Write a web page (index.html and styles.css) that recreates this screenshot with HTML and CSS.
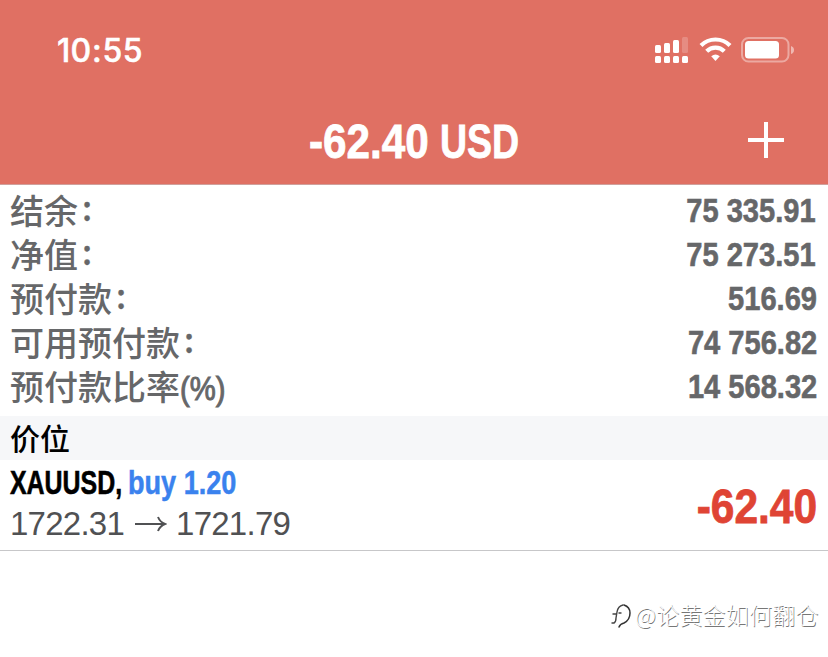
FILE: index.html
```html
<!DOCTYPE html>
<html lang="zh-CN">
<head>
<meta charset="utf-8">
<title>XAUUSD</title>
<link rel="stylesheet" href="styles.css">
</head>
<body>
<header class="header">
  <div class="status">
    <span class="clock">10<span class="clock-colon">:</span>55</span>
    <svg class="status-icons" width="142" height="30" viewBox="0 0 142 30" fill="#fff">
      <rect x="3" y="10" width="6" height="8" rx="1.5"/><rect x="12" y="8" width="6" height="10" rx="1.5"/><rect x="21" y="5" width="6" height="13" rx="1.5"/><rect x="30" y="2" width="6" height="16" rx="1.5" opacity=".2"/>
      <rect x="3" y="21" width="6" height="7" rx="1.5"/><rect x="12" y="21" width="6" height="7" rx="1.5"/><rect x="21" y="21" width="6" height="7" rx="1.5"/><rect x="30" y="21" width="6" height="7" rx="1.5"/>
      <g fill="none" stroke="#fff" stroke-width="4.2"><path d="M49 10.5a20.500 20.500 0 0 1 29 0"/><path d="M54.700 16.300a12.500 12.500 0 0 1 17.600 0"/></g>
      <path d="M59.200 21.300q4.300-3.600 8.600 0L63.500 26Z"/>
      <rect x="90" y="3" width="46.500" height="23.500" rx="6.500" fill="none" stroke="#fff" stroke-width="2" opacity=".4"/>
      <rect x="93" y="6" width="34" height="17.500" rx="3.500"/><path d="M139 11q3 1 3 4t-3 4Z" opacity=".5"/>
    </svg>
  </div>
  <div class="titlebar">
    <h1 class="title"><span class="amount">-62.40</span><span class="currency">USD</span></h1>
    <svg class="plus" width="36" height="36" viewBox="0 0 36 36"><path d="M18 0v36M0 18h36" stroke="#fff" stroke-width="4"/></svg>
  </div>
</header>
<main>
  <dl class="account">
    <div class="row"><dt>结余<i class="colon">:</i></dt><dd class="ends-one">75 335.91</dd></div>
    <div class="row"><dt>净值<i class="colon">:</i></dt><dd class="ends-one">75 273.51</dd></div>
    <div class="row"><dt>预付款<i class="colon">:</i></dt><dd>516.69</dd></div>
    <div class="row"><dt>可用预付款<i class="colon">:</i></dt><dd>74 756.82</dd></div>
    <div class="row"><dt>预付款比率<span class="percent">(%)</span></dt><dd>14 568.32</dd></div>
  </dl>
  <h2 class="section">价位</h2>
  <section class="position">
    <div>
      <div class="symbol"><span class="name">XAUUSD,</span><span class="side">buy 1.20</span></div>
      <div class="prices">1722.31<svg class="arrow" width="32" height="18" viewBox="0 0 32 18"><path d="M0 9h30M23 2q2 5 7 7q-5 2-7 7" fill="none" stroke="#505153" stroke-width="2"/></svg>1721.79</div>
    </div>
    <div class="profit">-62.40</div>
  </section>
</main>
<footer class="watermark">
  <svg class="mark" width="22" height="28" viewBox="0 0 22 28" fill="none" stroke-linecap="round"><path d="M2 22h2q2-1 2-5l1-6q1-6 6-7M3 13h3M9 12h2" stroke="#444" stroke-width="1.400"/><path d="M14 4q6 2 6 8 0 7-6 10-4 1-5 4" stroke="#333" stroke-width="1.500"/></svg>
  <span>@论黄金如何翻仓</span>
</footer>
</body>
</html>
```
FILE: styles.css
```css
* { box-sizing: border-box; }
body { margin: 0; width: 828px; height: 657px; overflow: hidden; background: #fff; font-family: "Liberation Sans", "Noto Sans CJK SC", sans-serif; }
h1, h2, dl, dd { margin: 0; }
.header { height: 185px; background: #e07063; border-bottom: 1px solid #d0a09c; color: #fff; }
.status { display: flex; justify-content: space-between; padding: 35px 34px 0 57px; height: 100px; }
.clock { font: 500 32px/31px Inter, sans-serif; letter-spacing: 0.3px; -webkit-text-stroke: 0.5px; }
.clock-colon { margin: 0 0.5px; }
.titlebar { display: grid; grid-template-columns: 1fr auto 1fr; align-items: center; height: 84px; padding: 0 44px; }
.title { grid-column: 2; display: grid; grid-template-columns: 131px 79px; font: bold 48px/60px "Liberation Sans", sans-serif; white-space: nowrap; -webkit-text-stroke: 0.8px; }
.amount { width: max-content; transform: scaleX(0.88); transform-origin: left; }
.currency { width: max-content; transform: scaleX(0.78); transform-origin: left; }
.plus { justify-self: end; margin-top: -5px; }
.account { height: 231px; padding: 4px 11px 0 10px; color: #666769; }
.row { display: flex; justify-content: space-between; height: 44px; line-height: 44px; }
.row dt { margin-top: -1px; font-family: "Noto Sans CJK SC", sans-serif; font-size: 34px; font-weight: 500; white-space: nowrap; }
.colon { display: inline-block; font-style: normal; margin-left: 4px; transform: translateY(-3px); -webkit-text-stroke: 0.3px; }
.percent, .row dd { font-family: "Liberation Sans", sans-serif; font-size: 34px; font-weight: bold; }
.row dd { margin-top: -1px; transform: scaleX(0.855); transform-origin: right; -webkit-text-stroke: 0.6px; }
.row dt .percent { display: inline-block; transform: scaleX(0.86); transform-origin: left; font-weight: 500; -webkit-text-stroke: 1px; }
.row dd.ends-one { padding-right: 2px; }
.section { height: 44px; padding-left: 10px; background: #f6f7f9; font: 500 30px/42px "Noto Sans CJK SC", sans-serif; color: #000; }
.position { display: flex; justify-content: space-between; height: 91px; padding: 3px 11px 0 10px; border-bottom: 1px solid #c7c7c9; }
.symbol { display: grid; grid-template-columns: 118px 108px; font: bold 33px/40px "Liberation Sans", sans-serif; color: #000; white-space: nowrap; }
.name { width: max-content; transform: scaleX(0.755); transform-origin: left; -webkit-text-stroke: 0.6px; }
.side { width: max-content; color: #3a82ee; transform: scaleX(0.82); transform-origin: left; -webkit-text-stroke: 0.5px; }
.prices { display: flex; align-items: center; height: 42px; font-size: 33px; letter-spacing: -0.75px; color: #505153; }
.arrow { margin: 0 9px 0 11px; }
.profit { font: bold 48px/88px "Liberation Sans", sans-serif; color: #df4434; transform: scaleX(0.885); transform-origin: right; -webkit-text-stroke: 0.8px; }
.watermark { display: flex; align-items: center; gap: 3px; height: 40px; margin: 44px 8px 0 610px; font: 300 23px/36px "Noto Sans CJK SC", sans-serif; color: #fff; text-shadow: 0.8px 0.8px 0.5px #777; letter-spacing: 0.2px; white-space: nowrap; }
.watermark span { margin-top: -3px; }
```
